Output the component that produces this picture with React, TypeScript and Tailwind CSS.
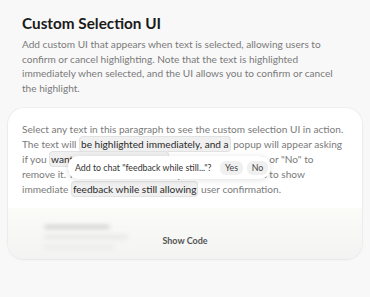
import React from "react";

const hl = "rounded-[4px] bg-[#f0f0f0] border border-[#e2e2e2] text-[#2a2a2a] px-[1px] py-[1px] [box-decoration-break:clone]";

export default function App() {
  return (
    <div className="min-h-[297px] w-[370px] bg-[#f8f8f8] overflow-hidden" style={{ fontFamily: 'Lato, "Noto Sans", sans-serif' }}>
      <div className="px-[22px] pt-[13px]">
        <h1 className="text-[15.3px] font-bold text-[#1a1a1a] leading-[20px]">Custom Selection UI</h1>
        <p className="mt-[4px] text-[10.1px] leading-[14.5px] text-[#7a7a7a]">
          Add custom UI that appears when text is selected, allowing users to confirm or cancel highlighting. Note that the text is highlighted immediately when selected, and the UI allows you to confirm or cancel the highlight.
        </p>
      </div>
      <div className="mx-[8px] mt-[13px] rounded-[16px] bg-white shadow-[0_0_0_1px_rgba(0,0,0,0.03),0_1px_3px_rgba(0,0,0,0.05)] overflow-hidden">
        <div className="relative pl-[14px] pr-[16px] pt-[13.5px] pb-[11px]">
          <p className="text-[10.1px] leading-[15px] text-[#7a7a7a]">
            Select any text in this paragraph to see the custom selection UI in action. The text will <span className={hl}>be highlighted immediately, and a</span> popup will appear asking if you <span className={hl}>want to keep the highlight</span>. Click "Yes" to keep it, or "No" to remove it. This creates a smooth experience that lets us to show immediate <span className={hl}>feedback while still allowing</span> user confirmation.
          </p>
          <div className="absolute left-[60px] top-[48px] h-[23px] w-[202px] flex items-center gap-[4px] rounded-[10px] bg-white pl-[7px] pr-[2px] shadow-[0_1px_6px_rgba(0,0,0,0.12)]">
            <span className="text-[8.8px] text-[#333] mr-auto">Add to chat "feedback while still..."?</span>
            <button className="rounded-[6px] bg-[#f0f0f0] w-[23px] h-[14px] text-[8.8px] text-[#444] leading-[14px]">Yes</button>
            <button className="rounded-[6px] bg-[#f0f0f0] w-[21px] h-[14px] text-[8.8px] text-[#444] leading-[14px]">No</button>
          </div>
        </div>
        <div className="relative h-[51px] bg-gradient-to-b from-[#fbfbf8] to-[#f3f3f3]">
          <div className="absolute left-[36px] top-[17px] flex flex-col gap-[6px] blur-[2px] opacity-70">
            <div className="h-[4px] w-[66px] rounded bg-[#c4c4c4]"></div>
            <div className="h-[4px] w-[84px] rounded bg-[#e0e0e0]"></div>
            <div className="h-[4px] w-[70px] rounded bg-[#e6e6e6]"></div>
          </div>
          <div className="absolute left-0 right-0 top-[26px] flex justify-center">
            <span className="text-[9px] leading-[14px] font-bold text-[#555]">Show Code</span>
          </div>
        </div>
      </div>
    </div>
  );
}
